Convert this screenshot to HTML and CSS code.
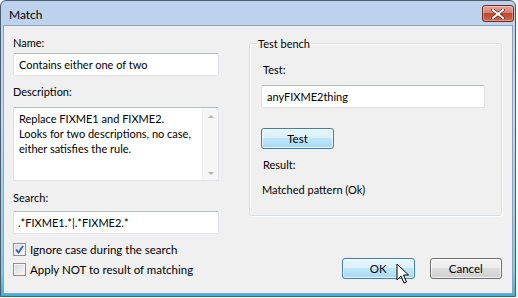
FILE: index.html
```html
<!DOCTYPE html>
<html lang="en">
<head>
    <meta charset="UTF-8">
    <meta name="viewport" content="width=device-width, initial-scale=1.0">
    <title>Match</title>
    <link rel="stylesheet" href="styles.css">
</head>
<body>

    <div class="window">
        <!-- Title bar -->
        <div class="titlebar">
            <span class="title">Match</span>
            <button class="close-btn" type="button">
                <svg width="14" height="10" viewBox="0 0 14 10">
                    <path d="M2 1 L12 9 M12 1 L2 9" stroke="#5a2a24" stroke-width="3.4" stroke-linecap="square"/>
                    <path d="M2 1 L12 9 M12 1 L2 9" stroke="#ffffff" stroke-width="2" stroke-linecap="square"/>
                </svg>
            </button>
        </div>

        <div class="client">
            <div class="left-col">
                <label class="lbl lbl-name">Name:</label>
                <div class="field">Contains either one of two</div>

                <label class="lbl lbl-desc">Description:</label>
                <div class="memo">
                    <div class="memo-text">Replace FIXME1 and FIXME2.<br>Looks for two descriptions, no case,<br>either satisfies the rule.</div>
                    <div class="scrollbar">
                        <span class="arrow-up"></span>
                        <span class="arrow-down"></span>
                    </div>
                </div>

                <label class="lbl lbl-search">Search:</label>
                <div class="field field-search">.*FIXME1.*|.*FIXME2.*</div>

                <div class="check check-first">
                    <span class="box checked">
                        <svg width="9" height="9" viewBox="0 0 9 9">
                            <path d="M1 4.5 L3.5 7.5 L8 1" fill="none" stroke="#2f5fb8" stroke-width="1.8"/>
                        </svg>
                    </span>
                    <span>Ignore case during the search</span>
                </div>
                <div class="check">
                    <span class="box"></span>
                    <span>Apply NOT to result of matching</span>
                </div>
            </div>

            <div class="right-col">
                <fieldset class="groupbox">
                    <legend>Test bench</legend>
                    <div class="lbl lbl-test">Test:</div>
                    <div class="field field-test">anyFIXME2thing</div>
                    <button class="btn btn-hot btn-test" type="button">Test</button>
                    <div class="lbl lbl-result">Result:</div>
                    <div class="lbl lbl-matched">Matched pattern (Ok)</div>
                </fieldset>

                <div class="dialog-buttons">
                    <button class="btn btn-hot btn-ok" type="button">OK</button>
                    <button class="btn btn-cancel" type="button">Cancel</button>
                    <svg class="cursor" width="14" height="22" viewBox="0 0 14 22">
                        <path d="M1 1 L1 17 L5 13 L8 20 L10.5 19 L7.5 12 L12.5 12 Z" fill="#ffffff" stroke="#000000" stroke-width="1" stroke-linejoin="miter"/>
                    </svg>
                </div>
            </div>
        </div>
    </div>

</body>
</html>
```

FILE: styles.css
```css
* {
    margin: 0;
    padding: 0;
    box-sizing: border-box;
}

body {
    font-family: 'Lato', 'Noto Sans', sans-serif;
    font-size: 11px;
    color: #000;
    background-color: #ffffff;
}

.window {
    width: 516px;
    height: 297px;
    border: 1px solid #4b5d72;
    border-radius: 6px 6px 0 0;
    background: linear-gradient(to bottom, #bcd2ec 0%, #c3d9ef 40%, #7ccbe6 92%, #31b6dc 100%);
    padding: 0 2px 2px 2px;
    display: flex;
    flex-direction: column;
}

.titlebar {
    height: 24px;
    display: flex;
    align-items: flex-start;
    justify-content: space-between;
    padding-left: 6px;
}

.title {
    font-size: 12px;
    line-height: 14px;
    margin-top: 7px;
    color: #000;
}

.close-btn {
    width: 32px;
    height: 17px;
    margin-top: 4px;
    margin-right: -1px;
    border: 1px solid #6d2a22;
    border-radius: 3px;
    background: linear-gradient(to bottom, #e8a394 0%, #d5826f 45%, #c2452d 50%, #cf6a4b 100%);
    box-shadow: inset 0 0 0 1px rgba(255, 255, 255, 0.35);
    display: flex;
    align-items: center;
    justify-content: center;
}

.client {
    flex: 1;
    background-color: #f0f0f0;
    border: 1px solid #8aa3bf;
    display: flex;
    padding: 0 0 0 9px;
}

.left-col {
    width: 206px;
    display: flex;
    flex-direction: column;
}

.lbl {
    line-height: 15px;
    display: block;
}

.lbl-name { margin-top: 9px; }
.lbl-desc { margin-top: 8px; }
.lbl-search { margin-top: 9px; }

.field {
    height: 23px;
    background: #fff;
    border: 1px solid #dfe3e9;
    border-top-color: #b5b9c0;
    border-radius: 2px;
    padding: 0 5px;
    line-height: 21px;
    white-space: nowrap;
    margin-top: 3px;
}

.field-search {
    margin-top: 6px;
    padding-left: 4px;
}

.memo {
    height: 74px;
    margin-top: 8px;
    background: #fff;
    border: 1px solid #dfe3e9;
    border-top-color: #b5b9c0;
    border-radius: 2px;
    display: flex;
}

.memo-text {
    flex: 1;
    padding: 3px 5px;
    line-height: 15px;
    white-space: nowrap;
}

.scrollbar {
    width: 16px;
    background: #f6f6f6;
    border-left: 1px solid #eeeeee;
    display: flex;
    flex-direction: column;
    justify-content: space-between;
    align-items: center;
    padding: 7px 0 5px 0;
}

.arrow-up,
.arrow-down {
    width: 0;
    height: 0;
    border-left: 3px solid transparent;
    border-right: 3px solid transparent;
}

.arrow-up { border-bottom: 3px solid #b4b4b4; }
.arrow-down { border-top: 3px solid #b4b4b4; }

.check {
    display: flex;
    align-items: center;
    gap: 4px;
    line-height: 15px;
    margin-top: 5px;
    font-size: 11.5px;
}

.check-first { margin-top: 8px; }

.box {
    width: 13px;
    height: 13px;
    border: 1px solid #8e8f8f;
    background: linear-gradient(135deg, #d8d8d8 0%, #ececec 60%, #f8f8f8 100%);
    box-shadow: inset 0 0 0 1px #f4f4f4;
    display: flex;
    align-items: center;
    justify-content: center;
}

.right-col {
    margin-left: 30px;
    width: 253px;
    display: flex;
    flex-direction: column;
}

.groupbox {
    margin-top: 10px;
    height: 180px;
    border: 1px solid #d5dfe5;
    border-radius: 3px;
    box-shadow: inset 1px 1px 0 #fff, 1px 1px 0 #fff;
    padding: 0 0 0 11px;
}

.groupbox legend {
    padding: 0 2px;
    margin-left: -5px;
    line-height: 15px;
}

.lbl-test { margin-top: 11px; margin-left: 2px; }

.field-test {
    width: 224px;
    margin-top: 8px;
}

.btn {
    height: 21px;
    border: 1px solid #707070;
    border-radius: 3px;
    background: linear-gradient(to bottom, #f2f2f2 0%, #ebebeb 49%, #dddddd 50%, #cfcfcf 100%);
    box-shadow: inset 0 0 0 1px rgba(255, 255, 255, 0.7);
    font-family: inherit;
    font-size: 11.5px;
    color: #000;
}

.btn-hot {
    border-color: #3c7fb1;
    background: linear-gradient(to bottom, #eaf6fd 0%, #d9f0fc 49%, #bee6fd 50%, #a7d9f5 100%);
}

.btn-test {
    width: 73px;
    margin-top: 20px;
}

.lbl-result { margin-top: 8px; margin-left: 2px; }
.lbl-matched { margin-top: 10px; margin-left: 1px; }

.dialog-buttons {
    position: relative;
    display: flex;
    gap: 15px;
    margin-top: 42px;
    margin-left: 93px;
}

.btn-ok,
.btn-cancel {
    width: 73px;
}

.cursor {
    position: absolute;
    left: 54px;
    top: 5px;
}
```
